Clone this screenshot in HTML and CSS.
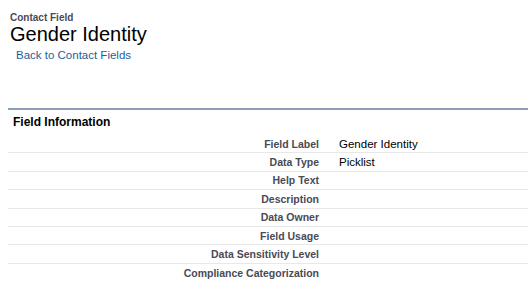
FILE: index.html
```html
<!DOCTYPE html>
<html>
<head>
<meta charset="utf-8">
<link rel="stylesheet" href="styles.css">
</head>
<body>
<div class="page-head">
  <div class="type">Contact Field</div>
  <h1 class="title">Gender Identity</h1>
  <a class="back" href="#">Back to Contact Fields</a>
</div>
<div class="block">
  <h2 class="block-title">Field Information</h2>
  <div class="list">
    <div class="row"><div class="lbl">Field Label</div><div class="val">Gender Identity</div></div>
    <div class="row"><div class="lbl">Data Type</div><div class="val">Picklist</div></div>
    <div class="row"><div class="lbl">Help Text</div><div class="val"></div></div>
    <div class="row"><div class="lbl">Description</div><div class="val"></div></div>
    <div class="row"><div class="lbl">Data Owner</div><div class="val"></div></div>
    <div class="row"><div class="lbl">Field Usage</div><div class="val"></div></div>
    <div class="row"><div class="lbl">Data Sensitivity Level</div><div class="val"></div></div>
    <div class="row last"><div class="lbl">Compliance Categorization</div><div class="val"></div></div>
  </div>
</div>
</body>
</html>
```
FILE: styles.css
```css
html, body {
  margin: 0;
  padding: 0;
  background: #fff;
  font-family: "Liberation Sans", Arial, sans-serif;
  color: #000;
}
.page-head {
  padding: 12px 0 0 10px;
}
.type {
  font-size: 10px;
  font-weight: bold;
  color: #4a4a56;
  line-height: 11px;
}
.title {
  margin: 0;
  font-size: 20px;
  font-weight: normal;
  line-height: 22px;
  color: #000;
}
.back {
  display: inline-block;
  margin: 3px 0 0 6px;
  font-size: 11.5px;
  line-height: 14px;
  color: #1a5fa0;
  text-decoration: none;
}
.block {
  margin: 45px 0 0 8px;
  border-top: 2px solid #8e9dbe;
}
.block-title {
  margin: 0;
  padding: 5px 0 0 5px;
  height: 19px;
  font-size: 12px;
  font-weight: bold;
  color: #000;
  line-height: 15px;
  box-sizing: border-box;
}
.list {
  padding-top: 6px;
}
.row {
  display: grid;
  grid-template-columns: 311px 1fr;
  height: 18.4px;
  border-bottom: 1px solid #e8e8e8;
  box-sizing: border-box;
  align-items: center;
}
.row.last {
  border-bottom: none;
}
.lbl {
  text-align: right;
  font-size: 10.5px;
  font-weight: bold;
  color: #4a4a56;
}
.val {
  padding-left: 20px;
  font-size: 11.5px;
  color: #000;
}
```
